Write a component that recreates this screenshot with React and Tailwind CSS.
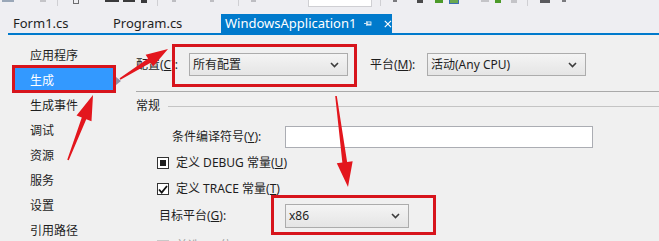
import React from 'react'

const FONT = '"Noto Sans", "Noto Sans CJK SC", sans-serif'

const navItems = ['应用程序', '生成', '生成事件', '调试', '资源', '服务', '设置', '引用路径']

// tapered red annotation arrow, points computed from tail/tip
const arrowPoints = (x1, y1, x2, y2, head = 24, hw = 8, tail = 0.8, neck = 2.4) => {
  const dx = x2 - x1
  const dy = y2 - y1
  const len = Math.hypot(dx, dy)
  const ux = dx / len
  const uy = dy / len
  const px = -uy
  const py = ux
  const bx = x2 - ux * head
  const by = y2 - uy * head
  const pts = [
    [x1 + px * tail, y1 + py * tail],
    [bx + px * neck, by + py * neck],
    [bx + px * hw, by + py * hw],
    [x2, y2],
    [bx - px * hw, by - py * hw],
    [bx - px * neck, by - py * neck],
    [x1 - px * tail, y1 - py * tail],
  ]
  return pts.map((p) => p.join(',')).join(' ')
}

const Chevron = () => (
  <svg width="9" height="6" viewBox="0 0 9 6">
    <path d="M1 1l3.5 3.5L8 1" fill="none" stroke="#3c3c3c" strokeWidth="1.6" />
  </svg>
)

const Select = ({ value, className }) => (
  <div
    className={`flex h-[23px] items-center justify-between border border-[#acacac] bg-linear-to-b from-[#f4f4f4] to-[#e5e5e5] pl-[3px] pr-[8px] text-[12px] text-[#1e1e1e] ${className}`}
  >
    <span>{value}</span>
    <Chevron />
  </div>
)

const Toolbar = () => (
  <div className="flex h-[12px] items-start bg-[#eeeef2]">
    <div className="ml-[2px] h-[2px] w-[12px] bg-[#9aa7b8]" />
    <div className="ml-[26px] h-[2px] w-[6px] bg-[#c4c4c8]" />
    <div className="ml-[11px] h-[6px] w-px bg-[#cfcfd3]" />
    <div className="ml-[15px] h-[4px] w-[6px] border border-t-0 border-[#6d6d70]" />
    <div className="ml-[26px] h-[2px] w-[14px] bg-[#3a3a3c]" />
    <div className="ml-[4px] h-[2px] w-[12px] bg-[#3a3a3c]" />
    <div className="ml-[6px] h-[3px] w-[6px] bg-[#3a3a3c]" />
    <div className="ml-[10px] h-[6px] w-px bg-[#cfcfd3]" />
    <div className="ml-[14px] h-[2px] w-[4px] bg-[#bdbdc2]" />
    <div className="ml-[34px] h-[2px] w-[4px] bg-[#bdbdc2]" />
    <div className="ml-[24px] h-[6px] w-px bg-[#cfcfd3]" />
    <div className="ml-[12px] h-[2px] w-[5px] bg-[#bdbdc2]" />
    <div className="ml-[52px] h-[7px] w-[64px] border border-t-0 border-[#cfcfd3] bg-white" />
    <div className="ml-[8px] h-[6px] w-px bg-[#cfcfd3]" />
    <div className="ml-[12px] h-[2px] w-[4px] bg-[#7a7a7e]" />
    <div className="ml-[20px] h-[3px] w-[6px] bg-[#4a4a4c]" />
    <div className="ml-[12px] h-[3px] w-[8px] bg-[#4c9a2a]" />
    <div className="ml-[6px] h-[4px] w-[10px] border border-t-0 border-[#3b6fb0] bg-[#6aa84f]" />
    <div className="ml-[22px] h-[2px] w-[8px] bg-[#c4c4c8]" />
    <div className="ml-[6px] h-[3px] w-[6px] bg-[#4c9a2a]" />
    <div className="ml-[10px] h-[3px] w-[6px] bg-[#c4c4c8]" />
    <div className="ml-[10px] h-[6px] w-px bg-[#cfcfd3]" />
    <div className="ml-[12px] h-[3px] w-[10px] bg-[#5a5a5e]" />
    <div className="ml-[12px] h-[2px] w-[4px] bg-[#7a7a7e]" />
  </div>
)

const Tabs = () => (
  <div className="flex h-[21px] items-end bg-[#eeeef2] text-[13px]" style={{ fontFamily: FONT }}>
    <div className="flex h-[19px] w-[113px] items-center pl-[13px] text-[#1e1e1e]">Form1.cs</div>
    <div className="flex h-[19px] w-[108px] items-center text-[#1e1e1e]">Program.cs</div>
    <div className="flex h-[19px] w-[171px] items-center bg-[#007acc] pl-[4px] text-white">
      <span>WindowsApplication1</span>
      <svg className="ml-[8px]" width="10" height="9" viewBox="0 0 10 9">
        <path d="M0 4.5h3M3.5 1.5v6" stroke="white" strokeWidth="1" fill="none" />
        <rect x="4" y="2.5" width="5" height="4" fill="none" stroke="white" strokeWidth="1" />
        <path d="M4 5.5h5" stroke="white" strokeWidth="1.2" />
      </svg>
      <svg className="ml-[12px]" width="10" height="10" viewBox="0 0 10 10">
        <path d="M1 1l8 8M9 1l-8 8" stroke="white" strokeWidth="1.5" />
      </svg>
    </div>
  </div>
)

const Check = ({ mode }) => (
  <div
    className={`flex h-[12px] w-[12px] items-center justify-center border bg-white ${
      mode === 'off' ? 'border-[#c8c8c8]' : 'border-[#333333]'
    }`}
  >
    {mode === 'mixed' && <div className="h-[6px] w-[6px] bg-[#1e1e1e]" />}
    {mode === 'on' && (
      <svg width="10" height="9" viewBox="0 0 10 9">
        <path d="M1 4.5l2.7 3L9 1" fill="none" stroke="#111" strokeWidth="1.8" />
      </svg>
    )}
  </div>
)

export default function App() {
  return (
    <div
      className="relative h-[241px] w-[659px] overflow-hidden bg-[#f0f0f0] text-[12px] text-[#1e1e1e]"
      style={{ fontFamily: FONT }}
    >
      <Toolbar />
      <Tabs />
      <div className="ml-[8px] h-[2px] bg-[#007acc]" />

      <div className="flex">
        {/* left navigation */}
        <div className="w-[136px] pt-[8px]">
          {navItems.map((item) => (
            <div key={item} className="flex items-center">
              <div
                className={`ml-[14px] flex h-[25px] w-[99px] items-center pl-[16px] ${
                  item === '生成' ? 'bg-[#3399ff] text-white' : ''
                }`}
              >
                {item}
              </div>
              {item === '生成' && (
                <svg className="ml-[3px]" width="5" height="8" viewBox="0 0 5 8">
                  <path d="M0 0l5 4-5 4z" fill="#8e8ea6" />
                </svg>
              )}
            </div>
          ))}
        </div>

        {/* property page */}
        <div className="flex flex-1 flex-col">
          <div className="mt-[18px] flex items-center">
            <span className="w-[53px]">配置(<u>C</u>):</span>
            <Select value="所有配置" className="w-[159px]" />
            <span className="ml-[22px] w-[57px]">平台(<u>M</u>):</span>
            <Select value="活动(Any CPU)" className="w-[159px]" />
          </div>

          <div className="mt-[15px] h-px bg-[#a9a9a9]" />

          <div className="mt-[6px] flex h-[16px] items-center">
            <span>常规</span>
            <div className="ml-[8px] h-px flex-1 bg-[#c4c4c4]" />
          </div>

          <div className="mt-[12px] flex items-center pl-[36px]">
            <span className="w-[113px]">条件编译符号(<u>Y</u>):</span>
            <div className="h-[22px] w-[308px] border border-[#abadb3] bg-white" />
          </div>

          <div className="mt-[5px] flex h-[20px] items-center gap-[7px] pl-[21px]">
            <Check mode="mixed" />
            <span>
              定义 DEBUG 常量(<u>U</u>)
            </span>
          </div>

          <div className="mt-[6px] flex h-[20px] items-center gap-[7px] pl-[21px]">
            <Check mode="on" />
            <span>
              定义 TRACE 常量(<u>T</u>)
            </span>
          </div>

          <div className="mt-[5px] flex items-center pl-[23px]">
            <span className="w-[126px]">目标平台(<u>G</u>):</span>
            <Select value="x86" className="h-[24px] w-[124px]" />
          </div>

          <div className="mt-[8px] flex h-[20px] items-center gap-[7px] pl-[21px] text-[#a0a0a0]">
            <Check mode="off" />
            <span>
              首选 32 位(<u>P</u>)
            </span>
          </div>
        </div>
      </div>

      {/* red annotation boxes */}
      <div className="absolute left-[12px] top-[65px] h-[28px] w-[104px] border-[3px] border-[#d7141c]" />
      <div className="absolute left-[172px] top-[44px] h-[43px] w-[185px] border-[3px] border-[#d7141c]" />
      <div className="absolute left-[271px] top-[195px] h-[40px] w-[165px] border-[3px] border-[#d7141c]" />

      {/* red annotation arrows */}
      <svg className="pointer-events-none absolute left-0 top-0" width="659" height="241">
        <polygon points={arrowPoints(120, 79, 168, 49, 22, 7)} fill="#e3161d" />
        <polygon points={arrowPoints(68, 160, 93, 95, 25, 8)} fill="#e3161d" />
        <polygon points={arrowPoints(336, 96, 348, 187, 25, 8)} fill="#e3161d" />
      </svg>
    </div>
  )
}
